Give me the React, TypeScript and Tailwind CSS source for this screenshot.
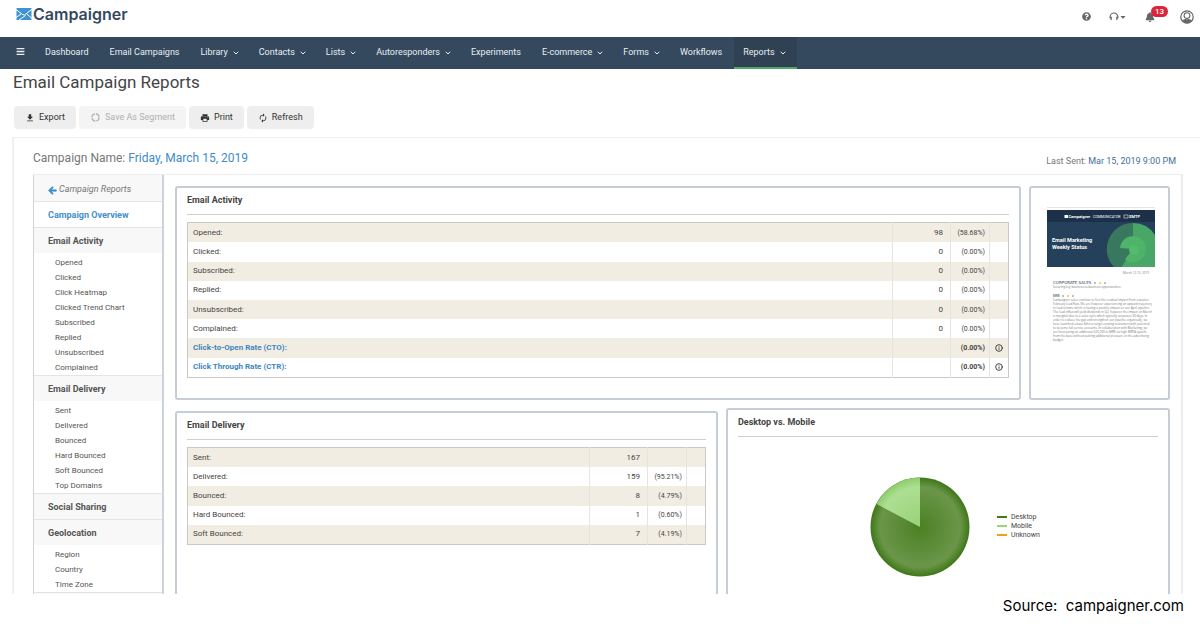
import { FaArrowLeft, FaBars, FaQuestionCircle, FaBell, FaCaretDown } from 'react-icons/fa';
import { MdFileDownload, MdPrint, MdAutorenew } from 'react-icons/md';
import { LuChevronDown, LuInfo } from 'react-icons/lu';

interface NavItem {
  label: string;
  menu?: boolean;
  active?: boolean;
}

interface StatRow {
  label: string;
  value?: string;
  percent?: string;
  link?: boolean;
}

interface MenuSection {
  title: string;
  items: string[];
}

const navItems: NavItem[] = [
  { label: 'Dashboard' },
  { label: 'Email Campaigns' },
  { label: 'Library', menu: true },
  { label: 'Contacts', menu: true },
  { label: 'Lists', menu: true },
  { label: 'Autoresponders', menu: true },
  { label: 'Experiments' },
  { label: 'E-commerce', menu: true },
  { label: 'Forms', menu: true },
  { label: 'Workflows' },
  { label: 'Reports', menu: true, active: true },
];

const sections: MenuSection[] = [
  {
    title: 'Email Activity',
    items: [
      'Opened',
      'Clicked',
      'Click Heatmap',
      'Clicked Trend Chart',
      'Subscribed',
      'Replied',
      'Unsubscribed',
      'Complained',
    ],
  },
  {
    title: 'Email Delivery',
    items: ['Sent', 'Delivered', 'Bounced', 'Hard Bounced', 'Soft Bounced', 'Top Domains'],
  },
  { title: 'Social Sharing', items: [] },
  { title: 'Geolocation', items: ['Region', 'Country', 'Time Zone'] },
];

const activityRows: StatRow[] = [
  { label: 'Opened:', value: '98', percent: '(58.68%)' },
  { label: 'Clicked:', value: '0', percent: '(0.00%)' },
  { label: 'Subscribed:', value: '0', percent: '(0.00%)' },
  { label: 'Replied:', value: '0', percent: '(0.00%)' },
  { label: 'Unsubscribed:', value: '0', percent: '(0.00%)' },
  { label: 'Complained:', value: '0', percent: '(0.00%)' },
  { label: 'Click-to-Open Rate (CTO):', percent: '(0.00%)', link: true },
  { label: 'Click Through Rate (CTR):', percent: '(0.00%)', link: true },
];

const deliveryRows: StatRow[] = [
  { label: 'Sent:', value: '167' },
  { label: 'Delivered:', value: '159', percent: '(95.21%)' },
  { label: 'Bounced:', value: '8', percent: '(4.79%)' },
  { label: 'Hard Bounced:', value: '1', percent: '(0.60%)' },
  { label: 'Soft Bounced:', value: '7', percent: '(4.19%)' },
];

const legend = [
  { label: 'Desktop', color: 'bg-[#437a1c]' },
  { label: 'Mobile', color: 'bg-[#98d67b]' },
  { label: 'Unknown', color: 'bg-[#f0a020]' },
];

const previewLines = [
  'Campaigner sales continue to feel the residual impact from a weaker',
  'February lead flow. We are however experiencing an upward trajectory',
  'in lead volume which is having a positive impact on our April pipeline.',
  'The lead influx will yield dividends in Q2, however the impact on March',
  'is marginal due to a sales cycle which typically surpasses 30 days. In',
  'order to reduce the gap and strengthen our pipeline organically, we',
  'have launched a base blitz to target existing customers with potential',
  'to become full service accounts. In collaboration with Marketing, we',
  'are forecasting an additional $25,000 in MRR via high MRPA upsells',
  'from the base without putting additional pressure on the advertising',
  'budget.',
];

function Logo() {
  return (
    <a href="#" className="flex items-center gap-px text-[#34495e]">
      <svg viewBox="0 0 16 12" className="h-3 w-4" aria-hidden="true">
        <rect x="0.500" width="15" height="12" fill="#3f93d2" />
        <path d="M0 1.500 6.500 6.500 8.500 7 16 1.200M0 9.500 5 6M3 12 9.500 7.500M11 6 16 10.500" fill="none" stroke="#fff" strokeWidth="1" />
      </svg>
      <span className="font-[Inter,sans-serif] text-base leading-5 font-semibold">Campaigner</span>
    </a>
  );
}

function TopBar() {
  return (
    <header className="flex h-[37px] shrink-0 items-center justify-between pr-1.5 pl-4 text-[#666]">
      <div className="pb-2.5">
        <Logo />
      </div>
      <div className="flex items-center pb-1">
        <button aria-label="Help" className="mr-[18px]">
          <FaQuestionCircle className="size-[9px]" />
        </button>
        <button aria-label="Support" className="mr-[18px] flex items-center">
          <svg viewBox="0 0 10 9" className="h-[9px] w-[10px]" aria-hidden="true">
            <path d="M1.200 6V4.800a3.800 3.800 0 0 1 7.600 0V6" fill="none" stroke="currentColor" strokeWidth="1.200" />
            <path d="M.6 4.800h2.200v3.200h-1zM7.200 4.800h2.200l-1.200 3.200h-1z" fill="currentColor" />
          </svg>
          <FaCaretDown className="size-2" />
        </button>
        <button aria-label="Notifications" className="relative mr-[25px]">
          <FaBell className="size-[10px]" />
          <span className="absolute -top-[6px] left-[6px] h-[11px] rounded-full bg-[#d9263c] px-1 text-[8px] leading-[11px] font-medium text-white">
            13
          </span>
        </button>
        <button aria-label="Account">
          <svg viewBox="0 0 14 14" className="size-[14px]" aria-hidden="true">
            <circle cx="7" cy="7" r="6.200" fill="none" stroke="currentColor" strokeWidth="1.200" />
            <circle cx="7" cy="5.600" r="2.900" fill="none" stroke="currentColor" strokeWidth="1.100" />
            <path d="M2 10.500Q4 9 5.300 8.900q1.700.9 3.400 0Q10 9 12 10.500 10 13.200 7 13.200T2 10.500" fill="currentColor" />
          </svg>
        </button>
      </div>
    </header>
  );
}

function NavBar() {
  const link = 'flex items-center border-b-2 pt-[2px] pl-[9px]';
  return (
    <nav className="flex h-8 shrink-0 items-stretch bg-[#34495e] pl-4 text-[9px] text-[#e8edf2]">
      <button aria-label="Menu" className="mr-[11px] pb-[3px]">
        <FaBars className="size-[9px]" />
      </button>
      {navItems.map((item) => (
        <a
          key={item.label}
          href="#"
          className={`${link} ${item.active ? 'border-[#4fa866] bg-[#2f4152]' : 'border-transparent'} ${
            item.menu ? 'gap-1 pr-[10px]' : 'pr-3'
          }`}
        >
          {item.label}
          {item.menu && <LuChevronDown className="size-2" strokeWidth={3} />}
        </a>
      ))}
    </nav>
  );
}

function Toolbar() {
  const button = 'flex h-[23px] items-center gap-1 rounded-sm px-[11px] text-[9px]';
  return (
    <div className="flex gap-[3px] pl-[14px]">
      <button className={`${button} bg-[#eee] text-[#333]`}>
        <MdFileDownload className="size-[10px]" />
        Export
      </button>
      <button disabled className={`${button} bg-[#f4f4f4] text-[#b0b0b0]`}>
        <svg viewBox="0 0 11 11" className="size-[11px]" aria-hidden="true">
          <circle cx="5.500" cy="5.500" r="3.600" fill="none" stroke="currentColor" strokeWidth="1.200" strokeDasharray="4.650 1" />
        </svg>
        Save As Segment
      </button>
      <button className={`${button} bg-[#eee] text-[#333]`}>
        <MdPrint className="size-[10px]" />
        Print
      </button>
      <button className={`${button} bg-[#eee] text-[#333]`}>
        <MdAutorenew className="size-[10px]" />
        Refresh
      </button>
    </div>
  );
}

function SideMenu() {
  return (
    <aside className="w-[131px] shrink-0 border-r-2 border-l border-[#cdd3da] text-[#555]">
      <a href="#" className="flex h-[26px] items-center gap-0.5 bg-[#f8f8f8] pt-1 pl-[14px] text-[9px] text-[#777] italic">
        <FaArrowLeft className="size-[9px] text-[#3a8fcc]" stroke="currentColor" strokeWidth={36} />
        Campaign Reports
      </a>
      <a href="#" className="flex h-[26px] items-center border-t border-[#e6e6e6] pt-[2px] pl-[14px] text-[9px] font-bold text-[#4490cc]">
        Campaign Overview
      </a>
      {sections.map((section) => (
        <section key={section.title}>
          <h3 className="flex h-[26px] items-center border-t border-[#e2e4e6] bg-[#f8f8f8] pt-[3px] pl-[14px] text-[9px] font-bold">
            {section.title}
          </h3>
          {section.items.length > 0 && (
            <ul className="pt-[2px] pl-[21px] text-[8px] leading-[15px]">
              {section.items.map((item) => (
                <li key={item}>
                  <a href="#">{item}</a>
                </li>
              ))}
            </ul>
          )}
        </section>
      ))}
      <div className="h-[26px] border-t border-[#e2e4e6] bg-[#f8f8f8]" />
    </aside>
  );
}

function StatTable({ rows, height }: { rows: StatRow[]; height: string }) {
  const cell = 'border-l border-[#e6e4e0] text-right';
  return (
    <table className={`w-full border-collapse border border-[#c9c9c5] text-[8px] leading-3 text-[#444] ${height}`}>
      <tbody>
        {rows.map((row) => (
          <tr key={row.label} className="odd:bg-[#f2ede2]">
            <th scope="row" className="pl-[5px] text-left font-normal">
              {row.link ? (
                <a href="#" className="font-bold text-[#3d86bf]">
                  {row.label}
                </a>
              ) : (
                row.label
              )}
            </th>
            <td className={`${cell} w-[58px] pr-[7px]`}>{row.value}</td>
            <td className={`${cell} w-[39px] pr-1 text-[7px] ${row.link ? 'font-bold' : ''}`}>{row.percent}</td>
            <td className={`${cell} w-[19px]`}>
              {row.link && <LuInfo className="mx-auto size-2" strokeWidth={3} />}
            </td>
          </tr>
        ))}
      </tbody>
    </table>
  );
}

function CardTitle({ children }: { children: string }) {
  return <h2 className="mb-[7px] border-b border-[#cfcfcf] pb-2 text-[9px] leading-3 font-bold text-[#444]">{children}</h2>;
}

function Dots() {
  return (
    <span className="flex gap-[3px]">
      <i className="size-[2px] rounded-full bg-[#aaa]" />
      <i className="size-[2px] rounded-full bg-[#ecd02f]" />
      <i className="size-[2px] rounded-full bg-[#aaa]" />
    </span>
  );
}

function EmailPreview() {
  return (
    <div className="ml-4 w-[108px] pt-[19px] font-['Open_Sans',sans-serif] text-[#777]">
      <div className="mb-0.5 border-t border-[#e4e4e4]" />
      <svg viewBox="0 0 108 57" className="w-full" fontFamily="Roboto, sans-serif" fill="#fff" fontWeight="700">
        <rect width="108" height="57" fill="#24405a" />
        <rect width="108" height="12" fill="#1c3049" />
        <path d="M86 13A26 26 0 0 0 67 57H86Z" fill="#38785f" />
        <path d="M86 13A26 26 0 0 1 108 25V57H74.700L86 39Z" fill="#48a768" />
        <path d="M86 39 73 38A13 13 0 1 1 78 49.300Z" fill="#4db46a" />
        <circle cx="87" cy="40" r="5" fill="#52bb6c" />
        <rect x="17.500" y="5" width="3.500" height="3" />
        <text x="21.500" y="8" fontSize="4">Campaigner</text>
        <text x="46" y="7.500" fontSize="3.500" fontWeight="400">COMMUNICATOR</text>
        <rect x="77" y="5" width="4" height="3" fill="none" stroke="#fff" strokeWidth="0.500" />
        <text x="82" y="8" fontSize="4">SMTP</text>
        <text x="5" y="32" fontSize="5.500">Email Marketing</text>
        <text x="5" y="38.500" fontSize="5.500">Weekly Status</text>
      </svg>
      <div className="px-[6px]">
        <p className="mt-1 text-right text-[3px] leading-1">March 12-15, 2019</p>
        <p className="mt-[5px] flex items-center gap-[3px] font-['DejaVu_Sans',sans-serif] text-[4px] leading-[5px] text-[#34495e]">
          CORPORATE SALES
          <Dots />
        </p>
        <p className="text-[3px] leading-1">Securing key business-to-business opportunities.</p>
        <p className="mt-[5px] flex items-center gap-[2px] text-[3px] leading-1 font-bold">
          MRR
          <Dots />
        </p>
        <div className="text-[3px] leading-1 whitespace-nowrap">
          {previewLines.map((line) => (
            <p key={line}>{line}</p>
          ))}
        </div>
      </div>
    </div>
  );
}

function DevicePie() {
  return (
    <div className="flex items-center gap-[27px] pt-[33px] pl-[132px]">
      <svg viewBox="0 0 100 100" className="size-[100px]" role="img" aria-label="Desktop vs. Mobile">
        <defs>
          <radialGradient id="desktop" gradientUnits="userSpaceOnUse" cx="50" cy="50" r="50">
            <stop offset="0" stopColor="#4b8024" />
            <stop offset="0.800" stopColor="#6b9649" />
            <stop offset="1" stopColor="#3d7516" />
          </radialGradient>
          <radialGradient id="mobile" gradientUnits="userSpaceOnUse" cx="50" cy="50" r="50">
            <stop offset="0" stopColor="#98d278" />
            <stop offset="0.800" stopColor="#addf92" />
            <stop offset="1" stopColor="#8bcc6a" />
          </radialGradient>
        </defs>
        <circle cx="50" cy="50" r="49.500" fill="url(#desktop)" />
        <path d="M50 50V.5A49.500 49.500 0 0 0 6.500 27Z" fill="url(#mobile)" />
      </svg>
      <ul className="pb-[2px] text-[7px] leading-[9px] text-[#444]">
        {legend.map((entry) => (
          <li key={entry.label} className="flex items-center gap-1">
            <span className={`h-[2px] w-[10px] ${entry.color}`} />
            {entry.label}
          </li>
        ))}
      </ul>
    </div>
  );
}

export default function App() {
  const card = 'rounded-[3px] border-2 border-[#c6cdd6] bg-white';
  return (
    <div className="flex h-screen flex-col overflow-hidden bg-white font-[Roboto,sans-serif]">
      <TopBar />
      <NavBar />
      <main className="min-h-0 flex-1 overflow-hidden">
        <h1 className="pt-0.5 pb-3 pl-[13px] text-[17px] leading-[23px] text-[#444]">Email Campaign Reports</h1>
        <Toolbar />
        <div className="mt-2 ml-3 border-t border-l-2 border-[#eef1f1] pr-[17px] pl-[19px]">
          <div className="flex h-9 items-center justify-between pr-[7px] text-[#777]">
            <p className="pt-[3px] text-[12px]">
              Campaign Name:{' '}
              <a href="#" className="text-[#3d8bc9]">
                Friday, March 15, 2019
              </a>
            </p>
            <p className="pt-3 text-[9px]">
              Last Sent: <span className="text-[#426f9c]">Mar 15, 2019 9:00 PM</span>
            </p>
          </div>
          <div className="flex border-t border-r-2 border-[#ececec]">
            <SideMenu />
            <div className="min-w-0 flex-1 px-[11px] pt-[11px]">
              <div className="flex gap-2">
                <section className={`${card} h-[214px] min-w-0 flex-1 px-[10px] pt-[6px]`}>
                  <CardTitle>Email Activity</CardTitle>
                  <StatTable rows={activityRows} height="h-[156px]" />
                </section>
                <section className={`${card} w-[141px] shrink-0`}>
                  <EmailPreview />
                </section>
              </div>
              <div className="flex gap-2 pt-2">
                <section className={`${card} mt-[3px] min-w-0 flex-21 px-[10px] pt-[6px]`}>
                  <CardTitle>Email Delivery</CardTitle>
                  <StatTable rows={deliveryRows} height="h-[98px]" />
                </section>
                <section className={`${card} h-[220px] min-w-0 flex-17 px-[10px] pt-[6px]`}>
                  <CardTitle>Desktop vs. Mobile</CardTitle>
                  <DevicePie />
                </section>
              </div>
            </div>
          </div>
        </div>
      </main>
      <footer className="h-8 shrink-0 pt-[2px] pr-4 text-right font-[Inter,sans-serif] text-[15px] leading-5 text-black">
        Source:&nbsp; campaigner.com
      </footer>
    </div>
  );
}
